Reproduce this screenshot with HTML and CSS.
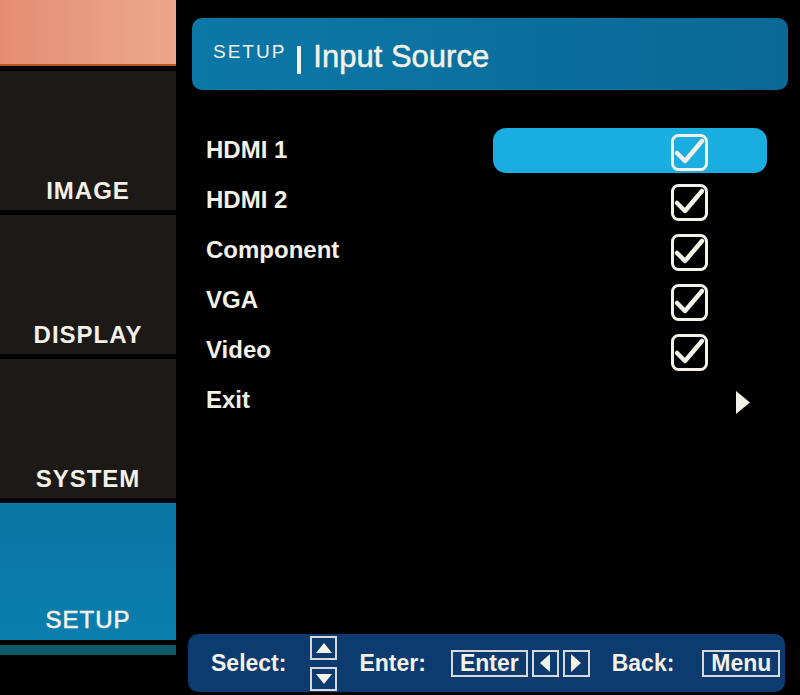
FILE: index.html
```html
<!DOCTYPE html>
<html lang="en">
<head>
  <meta charset="UTF-8">
  <meta name="viewport" content="width=device-width, initial-scale=1.0">
  <title>SETUP | Input Source</title>
  <link rel="stylesheet" href="styles.css">
</head>
<body>
  <!-- Left menu tabs -->
  <div class="sidebar">
    <div class="tab tab-top"></div>
    <div class="tab">IMAGE</div>
    <div class="tab">DISPLAY</div>
    <div class="tab">SYSTEM</div>
    <div class="tab active">SETUP</div>
    <div class="tab-strip"></div>
  </div>

  <div class="main">
    <!-- Title bar -->
    <div class="header">
      <span class="crumb">SETUP</span>
      <span class="sep"></span>
      <span class="title">Input Source</span>
    </div>

    <!-- Source list -->
    <ul class="items">
      <li class="item selected">
        <span class="label">HDMI 1</span>
        <span class="value">
          <svg class="check" viewBox="0 0 37 37"><rect x="1.5" y="1.5" width="34" height="34" rx="6"/><path d="M6 19 L14 27 L31 7"/></svg>
        </span>
      </li>
      <li class="item">
        <span class="label">HDMI 2</span>
        <span class="value">
          <svg class="check" viewBox="0 0 37 37"><rect x="1.5" y="1.5" width="34" height="34" rx="6"/><path d="M6 19 L14 27 L31 7"/></svg>
        </span>
      </li>
      <li class="item">
        <span class="label">Component</span>
        <span class="value">
          <svg class="check" viewBox="0 0 37 37"><rect x="1.5" y="1.5" width="34" height="34" rx="6"/><path d="M6 19 L14 27 L31 7"/></svg>
        </span>
      </li>
      <li class="item">
        <span class="label">VGA</span>
        <span class="value">
          <svg class="check" viewBox="0 0 37 37"><rect x="1.5" y="1.5" width="34" height="34" rx="6"/><path d="M6 19 L14 27 L31 7"/></svg>
        </span>
      </li>
      <li class="item">
        <span class="label">Video</span>
        <span class="value">
          <svg class="check" viewBox="0 0 37 37"><rect x="1.5" y="1.5" width="34" height="34" rx="6"/><path d="M6 19 L14 27 L31 7"/></svg>
        </span>
      </li>
      <li class="item">
        <span class="label">Exit</span>
        <span class="value exit">
          <svg class="arrow" viewBox="0 0 14 23"><path d="M0 0 L14 11.5 L0 23 Z"/></svg>
        </span>
      </li>
    </ul>

    <!-- Key help bar -->
    <div class="help">
      <span class="key-label">Select:</span>
      <span class="updown">
        <span class="key-box small"><svg viewBox="0 0 20 14"><path d="M2 12 L10 2 L18 12 Z"/></svg></span>
        <span class="key-box small"><svg viewBox="0 0 20 14"><path d="M2 2 L10 12 L18 2 Z"/></svg></span>
      </span>
      <span class="key-label">Enter:</span>
      <span class="key-box text enter">Enter</span>
      <span class="key-box arrow-key"><svg viewBox="0 0 14 20"><path d="M12 1 L2 10 L12 19 Z"/></svg></span>
      <span class="key-box arrow-key"><svg viewBox="0 0 14 20"><path d="M2 1 L12 10 L2 19 Z"/></svg></span>
      <span class="key-label back">Back:</span>
      <span class="key-box text">Menu</span>
    </div>
  </div>
</body>
</html>
```

FILE: styles.css
```css
body {
  margin: 0;
  padding: 0;
  width: 800px;
  height: 695px;
  background-color: #000;
  color: #f4f1e8;
  font-family: "Liberation Sans", Arial, sans-serif;
  display: flex;
  overflow: hidden;
}
.sidebar {
  width: 176px;
  display: flex;
  flex-direction: column;
  gap: 5px;
}
.tab {
  height: 139px;
  background-color: #1c1917;
  display: flex;
  align-items: flex-end;
  justify-content: center;
  padding-bottom: 7px;
  box-sizing: border-box;
  font-size: 24px;
  line-height: 24px;
  font-weight: bold;
  letter-spacing: 1px;
}
.tab-top {
  height: 66px;
  background: linear-gradient(to right, #e58d73, #eca88c);
  border-bottom: 2px solid #b3561e;
}
.tab.active {
  height: 137px;
  background: linear-gradient(to bottom, #0a76a5, #0b7eae);
  font-weight: normal;
  -webkit-text-stroke: 0.6px #f4f1e8;
  padding-bottom: 8px;
}
.tab-strip {
  height: 10px;
  background-color: #0e5a68;
}
.main {
  flex: 1;
  margin-left: 12px;
  padding-right: 10px;
  display: flex;
  flex-direction: column;
}
.header {
  margin: 18px 2px 0 4px;
  height: 72px;
  border-radius: 10px;
  background: linear-gradient(to right, #0b78a7, #0a6896);
  display: flex;
  align-items: center;
  padding-left: 21px;
}
.crumb {
  font-size: 19px;
  letter-spacing: 2px;
  margin-top: 2px;
  margin-bottom: 6px;
}
.sep {
  width: 4px;
  height: 28px;
  background-color: #f4f1e8;
  margin: 11px 12px 0 11px;
}
.title {
  font-size: 31px;
  margin-top: 6px;
  -webkit-text-stroke: 0.5px #f4f1e8;
}
.items {
  list-style: none;
  margin: 35px 0 0 0;
  padding: 0;
}
.item {
  height: 50px;
  display: flex;
  align-items: center;
}
.label {
  padding-left: 18px;
  font-size: 24px;
  font-weight: bold;
}
.value {
  margin-left: auto;
  margin-right: 23px;
  width: 274px;
  height: 45px;
  border-radius: 13px;
  display: flex;
  align-items: center;
  padding-left: 178px;
  padding-top: 4px;
  box-sizing: border-box;
}
.item.selected .value {
  background-color: #19ade0;
}
.value.exit {
  padding-left: 243px;
}
.check {
  width: 37px;
  height: 37px;
}
.check rect {
  fill: none;
  stroke: #f4f1e8;
  stroke-width: 3;
}
.check path {
  fill: none;
  stroke: #f4f1e8;
  stroke-width: 4.5;
  stroke-linecap: round;
  stroke-linejoin: round;
}
.arrow {
  width: 14px;
  height: 23px;
  fill: #f4f1e8;
}
.help {
  margin: auto 5px 3px 0;
  height: 58px;
  border-radius: 10px;
  background-color: #0b3b6f;
  display: flex;
  align-items: center;
  padding-left: 23px;
}
.key-label {
  font-size: 23px;
  font-weight: bold;
}
.updown {
  display: flex;
  flex-direction: column;
  gap: 7px;
  margin: 0 22px 0 24px;
}
.key-box {
  border: 2px solid #d9d9d9;
  box-sizing: border-box;
  display: flex;
  align-items: center;
  justify-content: center;
}
.key-box svg {
  fill: #f4f1e8;
}
.key-box.small {
  width: 27px;
  height: 24px;
}
.key-box.small svg {
  width: 20px;
  height: 14px;
}
.key-box.text {
  height: 27px;
  padding: 0 7px;
  font-size: 23px;
  font-weight: bold;
  line-height: 23px;
}
.key-box.enter {
  margin-left: 25px;
}
.key-box.arrow-key {
  width: 27px;
  height: 27px;
  margin-left: 4px;
}
.key-box.arrow-key svg {
  width: 14px;
  height: 20px;
}
.back {
  margin-left: 22px;
  margin-right: 28px;
}
```
